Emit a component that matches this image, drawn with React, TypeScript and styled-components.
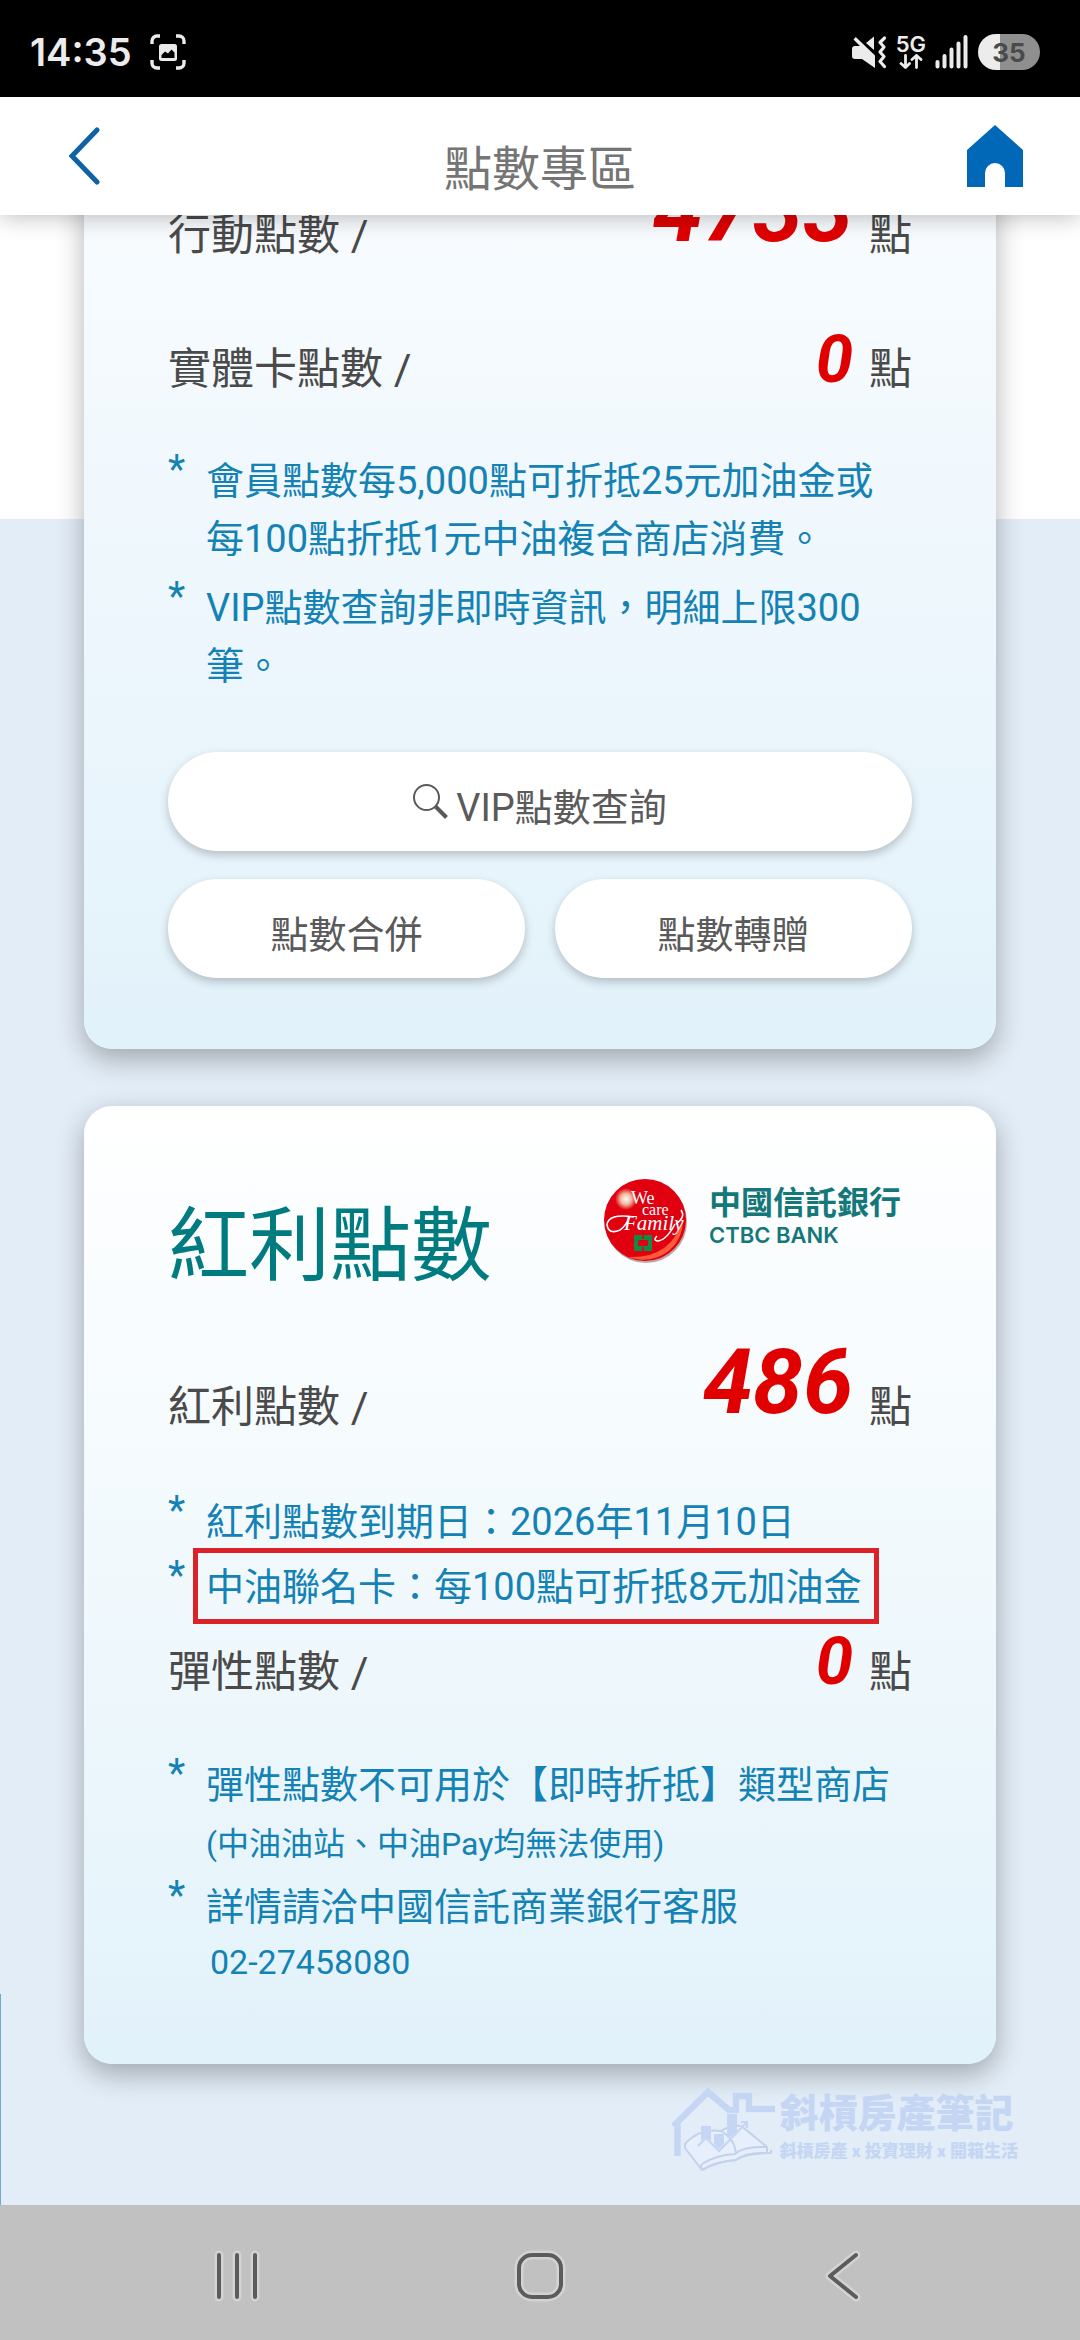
import React from "react";
import styled, { createGlobalStyle } from "styled-components";

const sans = `Roboto, "Noto Sans CJK TC", "Noto Sans", sans-serif`;

const GlobalStyle = createGlobalStyle`
  *, *::before, *::after { box-sizing: border-box; }
  body { margin: 0; background: #e3edf7; font-family: ${sans}; }
  h1, h2, p, ul { margin: 0; padding: 0; font-weight: 400; }
  button { border: 0; padding: 0; background: none; font: inherit; color: inherit; cursor: pointer; }
  svg { display: block; flex: none; }
`;

const Page = styled.div`
  display: flex;
  flex-direction: column;
  min-height: 100vh;
`;

const StatusBar = styled.div`
  display: flex;
  align-items: center;
  justify-content: space-between;
  height: 97px;
  padding: 6px 40px 0 30px;
  background: #000;
  color: #ececec;
`;

const StatusGroup = styled.div<{ $gap: number }>`
  display: flex;
  align-items: center;
  gap: ${(p) => p.$gap}px;
`;

const Clock = styled.time`
  font: 600 38px/48px Inter, ${sans};
`;

const Network = styled.div`
  display: flex;
  flex-direction: column;
  align-items: center;
  font: 600 22px/20px Inter, ${sans};
`;

const Battery = styled.div`
  width: 62px;
  height: 36px;
  border-radius: 18px;
  background: linear-gradient(90deg, #ececec 35%, #8f8f8f 35%);
  color: #4a4a4a;
  font: 700 26px/37px Inter, ${sans};
  text-align: center;
`;

const Header = styled.header`
  position: relative;
  z-index: 1;
  display: grid;
  grid-template-columns: 1fr auto 1fr;
  align-items: center;
  height: 118px;
  padding: 0 57px 0 69px;
  padding: 0 57px;
  background: #fff;
  box-shadow: 0 0 24px rgba(0, 0, 0, 0.3);
`;

const Title = styled.h1`
  padding-top: 28px;
  color: #757575;
  font-size: 48px;
  line-height: 56px;
`;

const IconButton = styled.button<{ $align?: "start" | "end" }>`
  display: flex;
  align-items: center;
  justify-content: center;
  justify-self: ${(p) => p.$align ?? "center"};
  width: 56px;
  height: 62px;
`;

const Main = styled.main`
  display: flex;
  flex: 1;
  flex-direction: column;
  gap: 57px;
  overflow: hidden;
  padding: 0 84px;
  background:
    linear-gradient(transparent 1779px, #6fa9c9 1779px) 0 0 / 1px 100% no-repeat,
    linear-gradient(#fff 304px, #e3edf7 304px);
`;

const Card = styled.section<{ $scrolled?: boolean }>`
  display: flex;
  flex-direction: column;
  margin-top: ${(p) => (p.$scrolled ? "-58px" : "0")};
  padding: ${(p) => (p.$scrolled ? "0 84px 71px" : "73px 84px 76px")};
  border-radius: 28px;
  background: linear-gradient(${(p) => (p.$scrolled ? "#f9fcff" : "#fff")}, #e2f2fa);
  box-shadow: 0 10px 28px rgba(0, 0, 0, 0.3);
`;

const CardHead = styled.div`
  display: flex;
  justify-content: space-between;
  height: 150px;
`;

const CardTitle = styled.h2`
  padding-top: 20px;
  color: #007c80;
  font-size: 81px;
  line-height: 96px;
`;

const Bank = styled.div`
  display: flex;
  gap: 22px;
  padding-right: 11px;
  color: #14787a;
`;

const BankName = styled.div`
  padding-top: 5px;
  font-weight: 700;
  font-size: 32px;
  line-height: 38px;
`;

const BankLatin = styled.div`
  font: 600 22px/26px Inter, ${sans};
`;

const PointRow = styled.div<{ $before?: number; $after: number }>`
  display: flex;
  align-items: flex-end;
  gap: 16px;
  margin: ${(p) => p.$before ?? 0}px 0 ${(p) => p.$after}px;
  color: #4a4a4a;
  font-size: 43px;
  line-height: 60px;
`;

const PointLabel = styled.p`
  flex: 1;
`;

const Amount = styled.strong<{ $large?: boolean }>`
  color: #e00000;
  font-size: ${(p) => (p.$large ? 90 : 67)}px;
  font-style: italic;
  font-weight: 700;
  line-height: 1.2;
`;

const Notes = styled.ul<{ $gap: number }>`
  display: flex;
  flex-direction: column;
  gap: ${(p) => p.$gap}px;
  padding-right: 16px;
  list-style: none;
  color: #1482b4;
  font-size: 38px;
  line-height: 58px;
`;

const Note = styled.li`
  display: grid;
  grid-template-columns: 38px 1fr;

  &::before {
    content: "*";
    font-size: 40px;
    line-height: 36px;
  }
`;

const Small = styled.span`
  display: block;
  font-size: 32px;
  line-height: 60px;
`;

const Phone = styled.a`
  display: block;
  padding-left: 4px;
  color: inherit;
  font-size: 34px;
  line-height: 52px;
  text-decoration: none;
`;

const Highlight = styled.span`
  position: relative;

  &::after {
    content: "";
    position: absolute;
    inset: -17px -18px -15px -13px;
    border: 5px solid #dc2229;
  }
`;

const Actions = styled.div`
  display: grid;
  grid-template-columns: 1fr 1fr;
  gap: 28px 30px;
  margin-top: 57px;
`;

const Pill = styled.button<{ $wide?: boolean }>`
  display: flex;
  justify-content: center;
  gap: 8px;
  grid-column: ${(p) => (p.$wide ? "1 / -1" : "auto")};
  height: 99px;
  border-radius: 50px;
  background: #fff;
  box-shadow: 0 4px 10px rgba(0, 0, 0, 0.22);
  color: #5a5a5a;
  font-size: 38px;
  line-height: 112px;

  svg { margin-top: 32px; }
`;

const Watermark = styled.div`
  display: flex;
  gap: 4px;
  align-self: flex-end;
  margin: -35px -22px 0 0;
  color: #c5d6f5;
`;

const WatermarkName = styled.p`
  padding-top: 4px;
  font-weight: 900;
  font-size: 39px;
  line-height: 48px;
`;

const WatermarkTags = styled.p`
  font-weight: 900;
  font-size: 17px;
  line-height: 26px;
  white-space: nowrap;
`;

const NavBar = styled.nav`
  display: grid;
  grid-template-columns: repeat(3, 1fr);
  place-items: center;
  height: 135px;
  padding: 6px 86px 0;
  background: #c1c1c1;
`;

const NavIcon = ({ d }: { d: string }) => (
  <svg width="54" height="54" viewBox="0 0 54 54" fill="none" strokeLinecap="round" strokeLinejoin="round">
    <path d={d} stroke="#d3d3d3" strokeWidth="9" />
    <path d={d} stroke="#5c5c5c" strokeWidth="4" />
  </svg>
);

const CaptureIcon = () => (
  <svg width="36" height="36" viewBox="0 0 36 36" fill="none">
    <path d="M2 10V7a5 5 0 0 1 5-5h3M26 2h3a5 5 0 0 1 5 5v3M34 26v3a5 5 0 0 1-5 5h-3M10 34H7a5 5 0 0 1-5-5v-3" stroke="#ececec" strokeWidth="3.4" />
    <rect x="9" y="10" width="18" height="17" rx="2.5" fill="#ececec" />
    <path d="M11.500 24v-3l3.500-3.500 3 2 3.500-4 3 3v5.500z" fill="#000" />
  </svg>
);

const MuteIcon = () => (
  <svg width="36" height="34" viewBox="0 0 36 34">
    <path d="M1 14q0-3 3-3h5L2.500 4.500 4.800 2 24 20.500V33L11 24H4q-3 0-3-3zM15 8l8-6.500V15z" fill="#ececec" />
    <path d="M33.500 3l-4.500 4.500 4 4.500-4 5 4 4.500-4 5 4.500 5" fill="none" stroke="#ececec" strokeWidth="3.200" strokeLinecap="round" strokeLinejoin="round" />
  </svg>
);

const SignalIcon = () => (
  <svg width="34" height="35" viewBox="0 0 34 35" stroke="#ececec" strokeWidth="4" strokeLinecap="round">
    <path d="M2.500 28v4.500M9.500 22v10.500M16.500 15.500v17M23.500 9.500v23M30.500 3v29.500" />
  </svg>
);

const SearchIcon = () => (
  <svg width="35" height="35" viewBox="0 0 35 35" fill="none" stroke="#5a5a5a">
    <circle cx="13.500" cy="13.500" r="12.500" strokeWidth="2" />
    <path d="M22.500 22.500l11 11" strokeWidth="4" />
  </svg>
);

const FamilyLogo = () => (
  <svg width="83" height="84" viewBox="0 0 83 84">
    <defs>
      <radialGradient id="shine">
        <stop offset="0" stopColor="#fff" />
        <stop offset="0.5" stopColor="#f4b79a" />
        <stop offset="1" stopColor="#e00010" />
      </radialGradient>
    </defs>
    <circle cx="42" cy="43" r="41" fill="#b9a9a9" />
    <circle cx="41" cy="41" r="41" fill="#e00010" />
    <path d="M24 78Q67 80 79 40 79 62 62 74 44 85 24 78z" fill="#ff5a3c" />
    <circle cx="22" cy="20" r="11" fill="url(#shine)" />
    <g fill="#fff" fontFamily="Liberation Serif, serif">
      <text x="27" y="25" fontSize="18">We</text>
      <text x="38" y="36" fontSize="16">care</text>
      <text x="20" y="51" fontSize="21" fontStyle="italic">Family</text>
    </g>
    <path d="M30 38Q4 34 3 46 5 56 16 51 22 47 26 37M72 45Q82 38 77 31M71 45Q62 62 53 62 49 61 53 57" fill="none" stroke="#fff" strokeWidth="1.600" />
    <rect x="30" y="56" width="18" height="16" fill="#118a43" />
    <path d="M39 56v4M39 68v4" stroke="#e00010" strokeWidth="1.500" />
    <rect x="34" y="61" width="10" height="6" rx="1" fill="#e00010" />
  </svg>
);

const HouseLogo = () => (
  <svg width="104" height="88" viewBox="0 0 104 88" fill="none">
    <path d="M5.500 70V40l-2-2L36 6l21 18h7V10h13v13h26" stroke="#c5d6f5" strokeWidth="6.500" />
    <path d="M13 58q14-16 36-13 16-10 24-2l22 18v6q-22-1-31 7-22 2-34 10L13 62z" fill="#e6effb" stroke="#c3d2ea" strokeWidth="2" />
    <path d="M30 84q16-9 34-10 10-7 35-7v-3M29 78l1 6M30 78q14-9 33-10 8-8 31-7M49 45q14 8 15 23" stroke="#c3d2ea" strokeWidth="2" />
    <path d="M29 40h10v15l-5-4-5 4zM42 48h10v10l-5 5-5-5zM55 28h10v20l-10 4z" fill="#c5d6f5" />
    <path d="M26 60l8-8 13 13 28-29M69 36h6v6" stroke="#c5d6f5" strokeWidth="2" />
  </svg>
);

export default function App() {
  return (
    <Page>
      <GlobalStyle />
      <StatusBar>
        <StatusGroup $gap={18}>
          <Clock>14:35</Clock>
          <CaptureIcon />
        </StatusGroup>
        <StatusGroup $gap={9}>
          <MuteIcon />
          <Network>
            5G
            <svg width="24" height="15" viewBox="0 0 24 15" fill="none" stroke="#ececec" strokeWidth="2.800" strokeLinecap="round" strokeLinejoin="round">
              <path d="M6.500 1.500v12M2 9.500l4.500 4 4-4M17.500 13.500v-12M13 5.500l4.500-4 4.500 4" />
            </svg>
          </Network>
          <SignalIcon />
          <Battery>35</Battery>
        </StatusGroup>
      </StatusBar>

      <Header>
        <IconButton aria-label="返回" $align="start">
          <svg width="32" height="58" viewBox="0 0 32 58" fill="none" stroke="#0e62a6" strokeWidth="5" strokeLinecap="round">
            <path d="M28 3L3 29l25 26" />
          </svg>
        </IconButton>
        <Title>點數專區</Title>
        <IconButton aria-label="首頁" $align="end">
          <svg width="56" height="62" viewBox="0 0 56 62" fill="#0068b7">
            <path d="M28 0l28 25v37H38V48a10 10 0 0 0-20 0v14H0V25z" />
          </svg>
        </IconButton>
      </Header>

      <Main>
        <Card $scrolled>
          <PointRow $after={54}>
            <PointLabel>行動點數 /</PointLabel>
            <Amount $large>4733</Amount>
            <span>點</span>
          </PointRow>
          <PointRow $after={53}>
            <PointLabel>實體卡點數 /</PointLabel>
            <Amount>0</Amount>
            <span>點</span>
          </PointRow>
          <Notes $gap={11}>
            <Note>
              <p>會員點數每5,000點可折抵25元加油金或每100點折抵1元中油複合商店消費。</p>
            </Note>
            <Note>
              <p>VIP點數查詢非即時資訊，明細上限300筆。</p>
            </Note>
          </Notes>
          <Actions>
            <Pill $wide>
              <SearchIcon />
              VIP點數查詢
            </Pill>
            <Pill>點數合併</Pill>
            <Pill>點數轉贈</Pill>
          </Actions>
        </Card>

        <Card>
          <CardHead>
            <CardTitle>紅利點數</CardTitle>
            <Bank>
              <FamilyLogo />
              <div>
                <BankName>中國信託銀行</BankName>
                <BankLatin>CTBC BANK</BankLatin>
              </div>
            </Bank>
          </CardHead>
          <PointRow $after={56}>
            <PointLabel>紅利點數 /</PointLabel>
            <Amount $large>486</Amount>
            <span>點</span>
          </PointRow>
          <Notes $gap={7}>
            <Note>
              <p>紅利點數到期日：2026年11月10日</p>
            </Note>
            <Note>
              <p>
                <Highlight>中油聯名卡：每100點可折抵8元加油金</Highlight>
              </p>
            </Note>
          </Notes>
          <PointRow $before={5} $after={54}>
            <PointLabel>彈性點數 /</PointLabel>
            <Amount>0</Amount>
            <span>點</span>
          </PointRow>
          <Notes $gap={4}>
            <Note>
              <p>
                彈性點數不可用於【即時折抵】類型商店
                <Small>(中油油站、中油Pay均無法使用)</Small>
              </p>
            </Note>
            <Note>
              <p>
                詳情請洽中國信託商業銀行客服
                <Phone href="tel:02-27458080">02-27458080</Phone>
              </p>
            </Note>
          </Notes>
        </Card>

        <Watermark>
          <HouseLogo />
          <div>
            <WatermarkName>斜槓房產筆記</WatermarkName>
            <WatermarkTags>斜槓房產 x 投資理財 x 開箱生活</WatermarkTags>
          </div>
        </Watermark>
      </Main>

      <NavBar>
        <IconButton aria-label="最近使用">
          <NavIcon d="M9 6v42M27 6v42M45 6v42" />
        </IconButton>
        <IconButton aria-label="主畫面">
          <NavIcon d="M19 6h16a13 13 0 0 1 13 13v16a13 13 0 0 1-13 13H19A13 13 0 0 1 6 35V19A13 13 0 0 1 19 6z" />
        </IconButton>
        <IconButton aria-label="上一頁">
          <NavIcon d="M40 6L14 27l26 21" />
        </IconButton>
      </NavBar>
    </Page>
  );
}
